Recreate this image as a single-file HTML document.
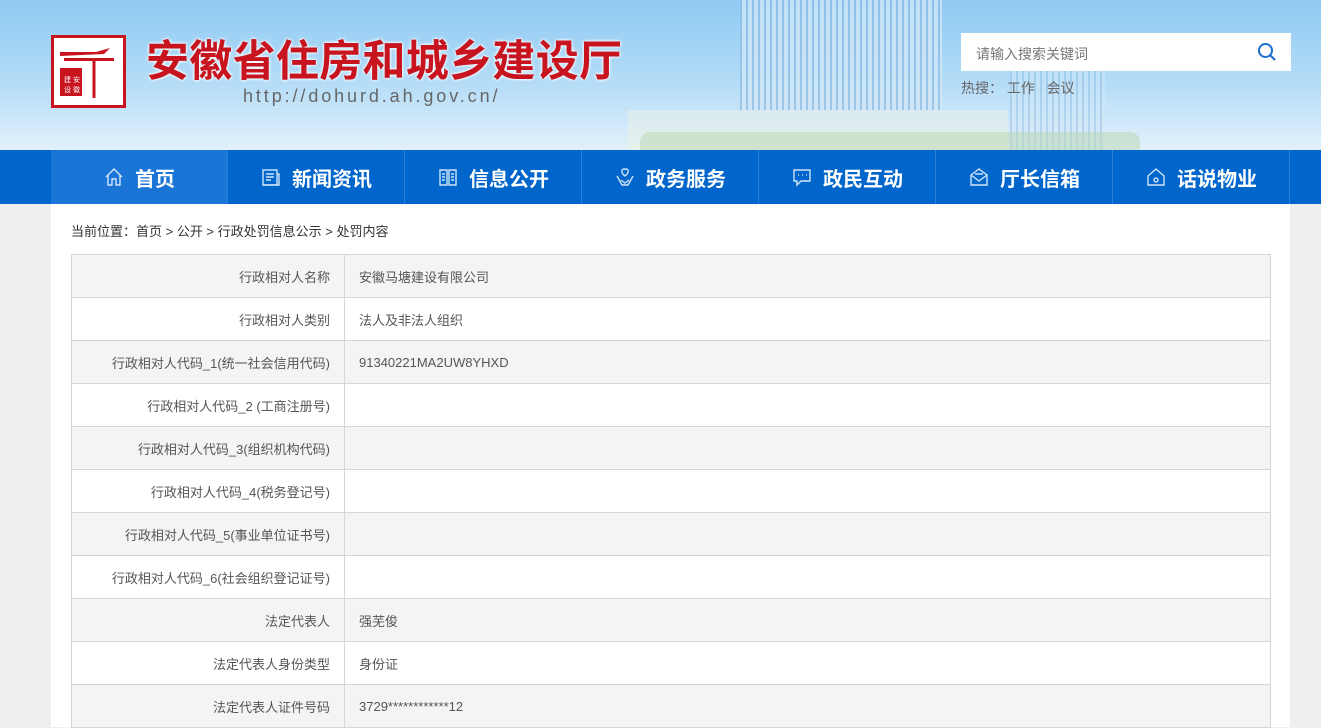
<!DOCTYPE html>
<html><head><meta charset="utf-8"><style>
*{margin:0;padding:0;box-sizing:border-box}
body{width:1321px;height:727px;overflow:hidden;background:#efefef;font-family:"Liberation Sans","Noto Sans CJK SC",sans-serif}
.hdr{position:absolute;left:0;top:0;width:1321px;height:150px;background:linear-gradient(180deg,#8fcaf3 0%,#b4dcf7 55%,#e2f1fb 100%);overflow:hidden}
.bld{position:absolute;background:repeating-linear-gradient(90deg,#8fbde3 0 2px,#d3e8f8 2px 6px)}
.logo{position:absolute;left:51px;top:35px;width:75px;height:73px;border:3px solid #c8141e;background:#fff}
.title{position:absolute;left:146px;top:31px;font-size:43px;font-weight:bold;color:#c8141e;letter-spacing:0.3px;text-shadow:0 0 3px #fff,0 0 3px #fff;font-family:"Noto Sans CJK SC",sans-serif;line-height:54px}
.url{position:absolute;left:243px;top:86px;font-size:18px;color:#666;letter-spacing:2.9px;font-family:"Liberation Sans",sans-serif}
.search{position:absolute;left:961px;top:33px;width:330px;height:38px;background:#fff}
.search span{position:absolute;left:15px;top:11px;font-size:14px;color:#777}
.hot{position:absolute;left:961px;top:78px;font-size:14px;color:#666}
.nav{position:absolute;left:0;top:150px;width:1321px;height:54px;background:#0066cc}
.nav div{position:absolute;top:0;height:54px;width:177px;border-right:1px solid #2c7fd6;color:#fff;font-size:20px;font-weight:bold;display:flex;align-items:center;justify-content:center;gap:10px}
.nav svg{width:22px;height:22px;fill:none;stroke:#cfe3f7;stroke-width:1.4}
.main{position:absolute;left:51px;top:204px;width:1239px;height:523px;background:#fff}
.crumb{position:absolute;left:20px;top:17px;font-size:13px;color:#333}
table{position:absolute;left:20px;top:50px;width:1200px;border-collapse:collapse;font-size:13px;color:#555}
td{border:1px solid #d6d6d6;height:43px;padding:0 14px}
td.l{width:273px;text-align:right}
tr:nth-child(odd){background:#f4f4f4}
</style></head><body>
<div class="hdr">
 <div class="bld" style="left:740px;top:0;width:202px;height:130px;opacity:.75"></div>
 <div class="bld" style="left:1010px;top:70px;width:95px;height:80px;opacity:.45"></div>
 <div style="position:absolute;left:628px;top:110px;width:380px;height:40px;background:linear-gradient(#d9e9f1,#e8f3ee)"></div>
 <div style="position:absolute;left:640px;top:132px;width:500px;height:18px;background:#b7d6b0;opacity:.5;border-radius:10px 10px 0 0"></div>
 <div class="logo"><svg width="69" height="67" viewBox="0 0 69 67"><path d="M6 14h36l14-4-6 6-44 2z" fill="#c8141e"/><path d="M10 20h50v3H10z" fill="#c8141e"/><path d="M40 20v40" stroke="#c8141e" stroke-width="3"/><rect x="6" y="30" width="22" height="28" fill="#c8141e"/><text x="10" y="44" font-size="7" fill="#fff">建 安</text><text x="10" y="54" font-size="7" fill="#fff">设 徽</text></svg></div>
 <div class="title">安徽省住房和城乡建设厅</div>
 <div class="url">http://dohurd.ah.gov.cn/</div>
 <div class="search"><span>请输入搜索关键词</span><svg style="position:absolute;right:14px;top:9px" width="20" height="20" viewBox="0 0 20 20"><circle cx="8.5" cy="8.5" r="6.5" stroke="#1a6fd0" stroke-width="2" fill="none"/><path d="M13 13l5 5" stroke="#1a6fd0" stroke-width="2.2"/></svg></div>
 <div class="hot">热搜： 工作 &nbsp; 会议</div>
</div>
<div class="nav">
 <div style="left:51px;background:#1a75d6"><svg viewBox="0 0 22 22"><path d="M3 11L11 3l8 8M5 9v10h4v-6h4v6h4V9"/></svg>首页</div>
 <div style="left:228px"><svg viewBox="0 0 22 22"><rect x="3" y="4" width="14" height="15"/><path d="M17 8h2v11H3M6 8h8M6 11h8M6 14h5"/></svg>新闻资讯</div>
 <div style="left:405px"><svg viewBox="0 0 22 22"><path d="M3 4h7v15H3zM12 4h7v15h-7zM5 8h3M5 11h3M5 14h3M14 8h3M14 11h3M14 14h3"/></svg>信息公开</div>
 <div style="left:582px"><svg viewBox="0 0 22 22"><path d="M11 10c-4-3-4-7-1-7 1 0 1 1 1 1s0-1 1-1c3 0 3 4-1 7zM3 10l5 9h6l5-9M7 14l4 3 4-3"/></svg>政务服务</div>
 <div style="left:759px"><svg viewBox="0 0 22 22"><path d="M3 4h16v11h-9l-4 4v-4H3zM7 9h1M11 9h1M15 9h1"/></svg>政民互动</div>
 <div style="left:936px"><svg viewBox="0 0 22 22"><path d="M3 9l8-6 8 6v10H3zM3 9l8 6 8-6M7 8h8"/></svg>厅长信箱</div>
 <div style="left:1113px"><svg viewBox="0 0 22 22"><path d="M3 10l8-7 8 7v9H3zM9 14a2 2 0 104 0 2 2 0 10-4 0"/></svg>话说物业</div>
</div>
<div class="main">
 <div class="crumb">当前位置：首页 &gt; 公开 &gt; 行政处罚信息公示 &gt; 处罚内容</div>
 <table>
  <tr><td class="l">行政相对人名称</td><td>安徽马塘建设有限公司</td></tr>
  <tr><td class="l">行政相对人类别</td><td>法人及非法人组织</td></tr>
  <tr><td class="l">行政相对人代码_1(统一社会信用代码)</td><td>91340221MA2UW8YHXD</td></tr>
  <tr><td class="l">行政相对人代码_2 (工商注册号)</td><td></td></tr>
  <tr><td class="l">行政相对人代码_3(组织机构代码)</td><td></td></tr>
  <tr><td class="l">行政相对人代码_4(税务登记号)</td><td></td></tr>
  <tr><td class="l">行政相对人代码_5(事业单位证书号)</td><td></td></tr>
  <tr><td class="l">行政相对人代码_6(社会组织登记证号)</td><td></td></tr>
  <tr><td class="l">法定代表人</td><td>强芜俊</td></tr>
  <tr><td class="l">法定代表人身份类型</td><td>身份证</td></tr>
  <tr><td class="l">法定代表人证件号码</td><td>3729************12</td></tr>
 </table>
</div>
</body></html>
